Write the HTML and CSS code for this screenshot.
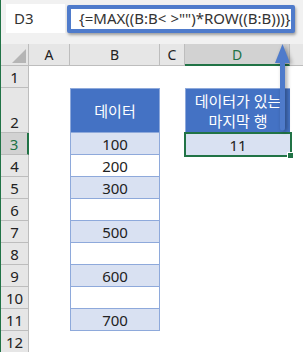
FILE: index.html
```html
<html>
  <head>
    <title>Last row with data</title>
    <link rel="stylesheet" href="styles.css">
  </head>
  <body>
    <div class="window">
      <div class="formula-bar">
        <div class="name-box">D3</div>
        <div class="formula-box">{=MAX((B:B<span class="op">&lt;</span>&gt;"")*ROW((B:B)))}</div>
      </div>

      <div class="sheet">
        <!-- column headers -->
        <div class="corner"><span class="corner-mark"></span></div>
        <div class="col-head">A</div>
        <div class="col-head">B</div>
        <div class="col-head">C</div>
        <div class="col-head selected">D</div>
        <div class="col-head tail"></div>

        <!-- row 1 -->
        <div class="row-head">1</div>
        <div class="cell"></div><div class="cell"></div><div class="cell"></div><div class="cell"></div><div class="cell"></div>

        <!-- row 2 -->
        <div class="row-head">2</div>
        <div class="cell"></div>
        <div class="cell head">데이터</div>
        <div class="cell"></div>
        <div class="cell head result-head">데이터가 있는<br>마지막 행</div>
        <div class="cell"></div>

        <!-- row 3 -->
        <div class="row-head selected">3</div>
        <div class="cell"></div>
        <div class="cell data fill">100</div>
        <div class="cell"></div>
        <div class="cell active">11<span class="handle"></span></div>
        <div class="cell"></div>

        <div class="row-head">4</div>
        <div class="cell"></div><div class="cell data">200</div><div class="cell"></div><div class="cell"></div><div class="cell"></div>

        <div class="row-head">5</div>
        <div class="cell"></div><div class="cell data fill">300</div><div class="cell"></div><div class="cell"></div><div class="cell"></div>

        <div class="row-head">6</div>
        <div class="cell"></div><div class="cell data"></div><div class="cell"></div><div class="cell"></div><div class="cell"></div>

        <div class="row-head">7</div>
        <div class="cell"></div><div class="cell data fill">500</div><div class="cell"></div><div class="cell"></div><div class="cell"></div>

        <div class="row-head">8</div>
        <div class="cell"></div><div class="cell data"></div><div class="cell"></div><div class="cell"></div><div class="cell"></div>

        <div class="row-head">9</div>
        <div class="cell"></div><div class="cell data fill">600</div><div class="cell"></div><div class="cell"></div><div class="cell"></div>

        <div class="row-head">10</div>
        <div class="cell"></div><div class="cell data"></div><div class="cell"></div><div class="cell"></div><div class="cell"></div>

        <div class="row-head">11</div>
        <div class="cell"></div><div class="cell data fill">700</div><div class="cell"></div><div class="cell"></div><div class="cell"></div>

        <div class="row-head">12</div>
        <div class="cell"></div><div class="cell"></div><div class="cell"></div><div class="cell"></div><div class="cell"></div>
      </div>

      <!-- arrow from D3 up to the formula -->
      <svg class="arrow" width="30" height="100" viewBox="0 0 30 100">
        <line x1="12.5" y1="20" x2="12.5" y2="88" stroke="#4f7bcb" stroke-width="5" stroke-linecap="round"/>
        <polygon points="12.5,4 5,23 20,23" fill="#4f7bcb"/>
      </svg>
    </div>
  </body>
</html>
```

FILE: styles.css
```css
body {
  margin: 0;
  background: #fff;
  font-family: "Noto Sans", "Noto Sans CJK KR", sans-serif;
  color: #222;
}
.window {
  position: relative;
  width: 303px;
  height: 352px;
  overflow: hidden;
  border-left: 1px solid #217346;
  box-sizing: border-box;
}
.formula-bar {
  height: 44px;
  background: #f1f1f1;
  display: flex;
  align-items: flex-start;
  padding: 4px 0 0 5px;
  box-sizing: border-box;
}
.name-box {
  width: 59px;
  height: 29px;
  background: #fff;
  font-size: 15px;
  line-height: 29px;
  padding-left: 8px;
  box-sizing: border-box;
  color: #333;
}
.formula-box {
  margin: 1px 0 0 2px;
  width: 228px;
  height: 28px;
  border: 4px solid #4f7bcb;
  border-radius: 2px;
  background: #fff;
  box-sizing: border-box;
  font-size: 15px;
  line-height: 19px;
  padding-left: 8px;
  white-space: nowrap;
  color: #333;
  box-shadow: 1px 2px 3px rgba(0,0,0,0.35);
}
.op {
  margin-right: 4px;
}
.sheet {
  display: grid;
  grid-template-columns: 28px 41px 90px 25px 105px 1fr;
  grid-template-rows: 22px 22px 45px repeat(10, 22px);
}
.corner,
.col-head,
.row-head {
  background: #e6e6e6;
  border-right: 1px solid #bdbdbd;
  border-bottom: 1px solid #bdbdbd;
  box-sizing: border-box;
  color: #222;
}
.corner {
  position: relative;
}
.corner-mark {
  position: absolute;
  right: 2px;
  bottom: 2px;
  width: 0;
  height: 0;
  border-left: 14px solid transparent;
  border-bottom: 14px solid #b5b5b5;
}
.col-head {
  font-size: 14px;
  display: flex;
  align-items: center;
  justify-content: center;
}
.col-head.tail {
  border-right: 0;
}
.col-head.selected {
  background: #d2d2d2;
  color: #217346;
  border-bottom: 2px solid #217346;
}
.row-head {
  font-size: 15px;
  display: flex;
  align-items: flex-end;
  justify-content: center;
  line-height: 20px;
}
.row-head.selected {
  background: #d2d2d2;
  color: #217346;
  border-right: 2px solid #217346;
}
.cell {
  font-size: 15px;
  display: flex;
  align-items: center;
  justify-content: center;
  box-sizing: border-box;
}
.head {
  background: #4472c4;
  color: #fff;
  border: 1px solid #8ea9db;
  text-align: center;
  line-height: 20px;
}
.result-head {
  border-right: 0;
  border-bottom: 0;
}
.data {
  border-left: 1px solid #8ea9db;
  border-right: 1px solid #8ea9db;
  border-bottom: 1px solid #8ea9db;
}
.fill {
  background: #d9e1f2;
}
.active {
  position: relative;
  background: #d9e1f2;
  border: 2px solid #217346;
  margin: -1px -2px -2px -1px;
}
.handle {
  position: absolute;
  right: -4px;
  bottom: -4px;
  width: 5px;
  height: 5px;
  background: #217346;
  border: 1px solid #fff;
}
.arrow {
  position: absolute;
  left: 269px;
  top: 40px;
  filter: drop-shadow(2px 1px 2px rgba(0,0,0,0.35));
}
```
